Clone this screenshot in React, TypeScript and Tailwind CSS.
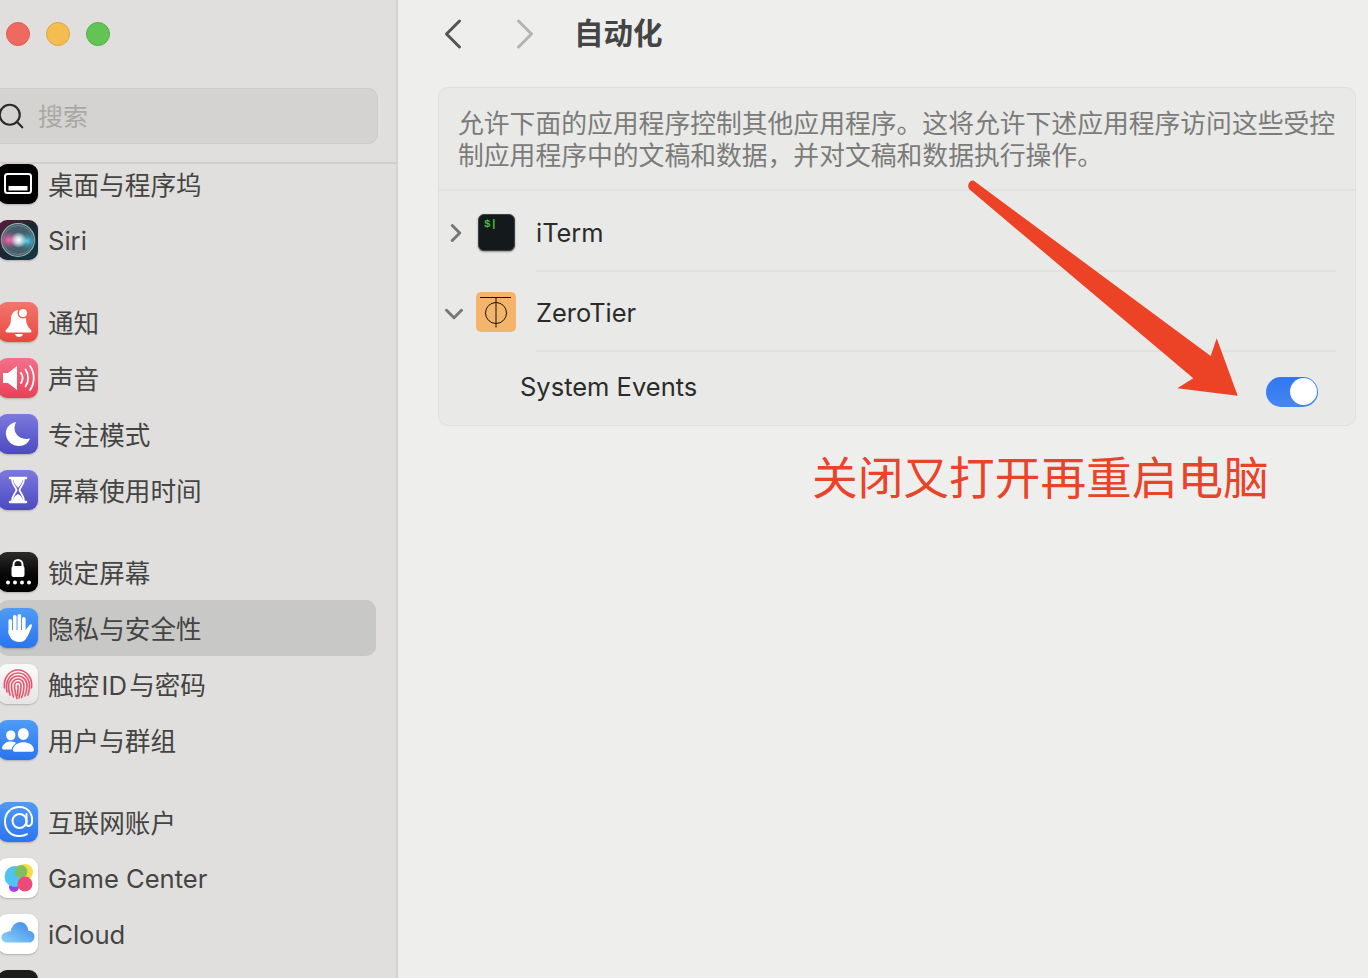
import { Search, ChevronLeft, ChevronRight, ChevronDown } from 'lucide-react';
import { IoPeople } from 'react-icons/io5';

function DockIcon() {
  return (
    <svg viewBox="-1 0 40 40" className="w-full h-full">
      <rect x="6" y="10" width="26" height="19" rx="2.500" fill="none" stroke="#fff" strokeWidth="2" />
      <rect x="9.500" y="22" width="19" height="4.500" fill="#fff" />
    </svg>
  );
}

function SiriIcon() {
  return (
    <svg viewBox="0 0 40 40" className="w-full h-full">
      <defs>
        <radialGradient id="siriL"><stop offset="0" stopColor="#ff6cb0" /><stop offset="1" stopColor="#b04a80" stopOpacity="0.25" /></radialGradient>
        <radialGradient id="siriR"><stop offset="0" stopColor="#5fd4f0" /><stop offset="1" stopColor="#2c7f9a" stopOpacity="0.25" /></radialGradient>
        <radialGradient id="siriC"><stop offset="0" stopColor="#fff" /><stop offset="0.4" stopColor="#e8f4ff" stopOpacity="0.8" /><stop offset="1" stopColor="#fff" stopOpacity="0" /></radialGradient>
      </defs>
      <circle cx="20" cy="20" r="16.500" fill="#43606b" stroke="#7cc3a4" strokeWidth="1.200" />
      <circle cx="20" cy="20" r="14.500" fill="none" stroke="#8a6f9a" strokeWidth="1" />
      <ellipse cx="11" cy="20" rx="9" ry="8" fill="url(#siriL)" />
      <ellipse cx="29" cy="21" rx="9" ry="8" fill="url(#siriR)" />
      <circle cx="20.500" cy="20" r="8" fill="url(#siriC)" />
    </svg>
  );
}

function BellIcon() {
  return (
    <svg viewBox="-1 0 40 40" className="w-full h-full" fill="#fff">
      <path d="M20 8c-5 0-8 4-8 9 0 5-2 8-5 11-1 1-.5 2.500 1 2.500h23c1.500 0 2-1.500 1-2.500-3-3-5-6-5-11 0-5-3-9-7-9z" />
      <path d="M16 32h8c-.5 2-2 3-4 3s-3.500-1-4-3z" />
      <circle cx="24" cy="11" r="5.500" fill="#ee5f56" />
      <circle cx="24" cy="11" r="4" />
    </svg>
  );
}

function SoundIcon() {
  return (
    <svg viewBox="-2 0 40 40" className="w-full h-full">
      <path d="M3 15h5l9-7v24l-9-7H3z" fill="#fff" />
      <g fill="none" stroke="#fff" strokeWidth="1.800" strokeLinecap="round">
        <path d="M21 15c2 3 2 7 0 10" />
        <path d="M25.500 11.500c3.500 5 3.500 12 0 17" />
        <path d="M30 8c5 7 5 17 0 24" />
      </g>
    </svg>
  );
}

function MoonIcon() {
  return (
    <svg viewBox="-2 0 40 40" className="w-full h-full">
      <path d="M16 8c-7 1.500-11 7-10 13 1 6.500 6.500 11 13 11 5.500 0 9.500-3 11-7.500-7 1.500-13-1.500-15-7-1-3.500-.5-6 1-9.500z" fill="#fff" />
    </svg>
  );
}

function HourglassIcon() {
  return (
    <svg viewBox="-1 0 40 40" className="w-full h-full">
      <path d="M11 8h16M11 32h16" stroke="#fff" strokeWidth="2.500" strokeLinecap="round" />
      <path d="M13 9h12c0 6-4 8-4.500 11 .5 3 4.500 5 4.500 11H13c0-6 4-8 4.500-11C17 17 13 15 13 9z" fill="none" stroke="#fff" strokeWidth="1.800" />
      <path d="M14.500 10h9c-.5 4-3 5.500-4.500 8-1.500-2.500-4-4-4.500-8zM14 30c.5-3 3-5 5-6 2 1 4.500 3 5 6z" fill="#fff" />
    </svg>
  );
}

function LockIcon() {
  return (
    <svg viewBox="0 0 40 40" className="w-full h-full">
      <path d="M15.500 15v-2.500a4.500 4.500 0 0 1 9 0V15" fill="none" stroke="#fff" strokeWidth="2" />
      <rect x="13.500" y="14" width="13" height="11" rx="2" fill="#fff" />
      {[10, 17, 24, 31].map((x) => (
        <circle key={x} cx={x} cy="30.500" r="2" fill="#fff" />
      ))}
    </svg>
  );
}

function HandIcon() {
  return (
    <svg viewBox="0 0 40 40" className="w-full h-full" fill="#fff">
      <rect x="10.500" y="11" width="3.600" height="16" rx="1.800" />
      <rect x="15" y="7" width="3.600" height="20" rx="1.800" />
      <rect x="19.500" y="6" width="3.600" height="20" rx="1.800" />
      <rect x="24" y="9" width="3.600" height="18" rx="1.800" />
      <path d="M10.500 22h17l4-5c1.500-1.500 3-.5 2.300 1.500-1.300 3.500-3 8-5.300 11.500-1.500 2.500-3.500 4-7 4-6.500 0-11-4-11-12z" />
    </svg>
  );
}

function FingerprintIcon() {
  return (
    <svg viewBox="0 0 40 40" className="w-full h-full" fill="none" stroke="#e8546c" strokeWidth="1.600" strokeLinecap="round">
      <path d="M6.500 24c-1.500-10 5-18 13.500-18s15 8 13.500 18" />
      <path d="M9 28c-2-9 2-19 11-19s13 9 11 18c-.3 1.500-.5 2.500-1 4" />
      <path d="M12 31c-1-3-1.500-6-1.500-9 0-5 4-10 9.500-10s9.500 5 9 11c-.2 3-1 6-2 9" />
      <path d="M15.500 33c-1-3.500-2-7-2-11 0-4 3-7 6.500-7s6.500 3 6 8c-.2 3.500-1 7-2.300 10.500" />
      <path d="M19 34.500c-1.200-4-2.500-8-2.500-12.500 0-2 1.500-4 3.500-4s3.500 2 3 5.500c-.3 3.500-1 7-2 10.500" />
      <path d="M20 21.500c.3 4-.3 8-.5 10" />
    </svg>
  );
}

function AtIcon() {
  return (
    <svg viewBox="-2 0 40 40" className="w-full h-full" fill="none" stroke="#fff" strokeWidth="2">
      <circle cx="19.500" cy="19" r="7" />
      <path d="M26.500 12v10c0 3 5 3 5.500-2 1-8-4-15-12.500-15C11 5 5 11 5 19.500S11 34 19 34c3 0 6-.5 8-2" strokeLinecap="round" />
    </svg>
  );
}

function GameCenterIcon() {
  return (
    <svg viewBox="0 0 40 40" className="w-full h-full">
      <circle cx="16" cy="29" r="5" fill="#a23fe0" />
      <circle cx="17" cy="18.500" r="10.500" fill="#4fc3f2" />
      <circle cx="27" cy="14" r="8" fill="#f7dd3f" />
      <circle cx="23" cy="13.500" r="6.500" fill="#7fbf62" />
      <circle cx="27" cy="26" r="7.500" fill="#ee4a78" />
    </svg>
  );
}

function CloudIcon() {
  return (
    <svg viewBox="0 0 40 40" className="w-full h-full">
      <defs>
        <linearGradient id="cloudFill" x1="0" y1="1" x2="1" y2="0">
          <stop offset="0" stopColor="#8fd3f7" />
          <stop offset="1" stopColor="#3a86e8" />
        </linearGradient>
      </defs>
      <path d="M9 28.500c-3.500 0-5.500-2.500-5.500-5 0-3 2.500-5 5-5 1-1 2.500-1.500 4-1 1.500-6 5-9.500 9.500-9.500 5 0 8 4 8.500 9 3-.5 6 2 6 5.500s-2.500 6-4.500 6z" fill="url(#cloudFill)" />
    </svg>
  );
}

interface Item {
  label: string;
  box: string;
  icon?: React.ReactNode;
  active?: boolean;
}

const sections: Item[][] = [
  [
    { label: '桌面与程序坞', box: 'bg-black', icon: <DockIcon /> },
    { label: 'Siri', box: 'bg-gradient-to-br from-[#5b1a3a] via-[#1c2430] to-[#0f3a4a]', icon: <SiriIcon /> },
  ],
  [
    { label: '通知', box: 'bg-gradient-to-b from-[#f2766c] to-[#e8463f]', icon: <BellIcon /> },
    { label: '声音', box: 'bg-gradient-to-b from-[#f3708a] to-[#e93f58]', icon: <SoundIcon /> },
    { label: '专注模式', box: 'bg-gradient-to-b from-[#7d79dd] to-[#4c49c0]', icon: <MoonIcon /> },
    { label: '屏幕使用时间', box: 'bg-gradient-to-b from-[#7d79dd] to-[#4c49c0]', icon: <HourglassIcon /> },
  ],
  [
    { label: '锁定屏幕', box: 'bg-gradient-to-b from-[#2c2c2c] to-black', icon: <LockIcon /> },
    { label: '隐私与安全性', box: 'bg-gradient-to-b from-[#4f9bf5] to-[#2b74f0]', icon: <HandIcon />, active: true },
    { label: '触控\u200AID\u200A与密码', box: 'bg-gradient-to-b from-[#fbfbfb] to-[#e6e5e4]', icon: <FingerprintIcon /> },
    {
      label: '用户与群组',
      box: 'bg-gradient-to-b from-[#4f9bf5] to-[#2b74f0]',
      icon: <IoPeople className="w-[34px] h-[34px] text-white" />,
    },
  ],
  [
    { label: '互联网账户', box: 'bg-gradient-to-b from-[#4f9bf5] to-[#2b74f0]', icon: <AtIcon /> },
    { label: 'Game Center', box: 'bg-white', icon: <GameCenterIcon /> },
    { label: 'iCloud', box: 'bg-white', icon: <CloudIcon /> },
    { label: '', box: 'bg-[#1c1c1c]' },
  ],
];

function SidebarRow({ item }: { item: Item }) {
  // Latin labels sit a pixel higher than the CJK ones
  const latin = /^[A-Za-z]/.test(item.label);
  return (
    <div
      className={`h-[56px] w-[378px] -ml-[2px] flex items-center gap-[10px] rounded-[10px] ${
        item.active ? 'bg-[#c8c8c6]' : ''
      }`}
    >
      <div className={`w-[40px] h-[40px] -mt-[1px] shrink-0 rounded-[9px] flex items-center justify-center shadow-[0_1px_2px_rgba(0,0,0,0.22)] ${item.box}`}>
        {item.icon}
      </div>
      <span className={`${latin ? 'mt-[1px]' : 'mt-[3px]'} text-[25.600px] leading-none text-[#444443]`}>{item.label}</span>
    </div>
  );
}

function Sidebar() {
  return (
    <aside className="w-[398px] h-full shrink-0 flex flex-col bg-[#e0dfdd] border-r-2 border-[#d3d2d0] overflow-hidden">
      {/* Traffic lights */}
      <div className="h-[88px] shrink-0 pl-[6px] pt-[22px] flex gap-[16px]">
        <div className="w-[24px] h-[24px] rounded-full bg-[#ee6a5f] border border-[#dd5c52]" />
        <div className="w-[24px] h-[24px] rounded-full bg-[#f5bd4f] border border-[#dfa63e]" />
        <div className="w-[24px] h-[24px] rounded-full bg-[#61c454] border border-[#55b049]" />
      </div>

      {/* Search */}
      <div className="h-[56px] w-[390px] shrink-0 -ml-[12px] flex items-center gap-[12px] pl-[7px] rounded-[10px] bg-[#d4d3d1] border border-[#cdccca]">
        <Search className="w-[30px] h-[30px] text-[#2a2a2a]" strokeWidth={1.700} />
        <span className="mt-[3px] text-[25px] leading-none text-[#a9a8a6]">搜索</span>
      </div>

      <div className="h-[18px] shrink-0" />
      <div className="h-[2px] shrink-0 bg-[#cfcecc]" />

      {/* Settings list */}
      <div className="flex-1 min-h-0 overflow-hidden">
        <div className="-mt-[8px] flex flex-col gap-[26px]">
          {sections.map((rows, i) => (
            <div key={i} className="flex flex-col">
              {rows.map((item, j) => (
                <SidebarRow key={j} item={item} />
              ))}
            </div>
          ))}
        </div>
      </div>
    </aside>
  );
}

function ITermIcon() {
  return (
    <div className="w-[37px] h-[37px] -mt-[2px] rounded-[6px] bg-[#14191b] border border-[#3b4144] shadow-[0_1px_2px_rgba(0,0,0,0.4)] pl-[5px] pt-[2px]">
      <span className="block text-[11px] leading-[15px] font-bold text-[#42c03a] font-['Liberation_Mono',monospace]">$|</span>
    </div>
  );
}

function ZeroTierIcon() {
  return (
    <svg viewBox="0 0 40 40" className="w-[40px] h-[40px] -mt-[2px]">
      <rect width="40" height="40" rx="5" fill="#f3b56b" />
      <path d="M4 5.500h31M20 5.500v30" stroke="#1a1408" strokeWidth="1" fill="none" />
      <circle cx="20" cy="21" r="10.500" stroke="#1a1408" strokeWidth="1" fill="none" />
    </svg>
  );
}

function Toggle() {
  return (
    <div className="w-[52px] h-[30px] mt-[6px] rounded-full bg-gradient-to-b from-[#2f78ee] to-[#4587f3] flex items-center justify-end pr-[1px]">
      <div className="w-[27px] h-[27px] rounded-full bg-white" />
    </div>
  );
}

function Main() {
  return (
    <main className="flex-1 min-w-0 h-full flex flex-col bg-[#eeeeec] pl-[40px] pr-[12px]">
      <header className="h-[68px] shrink-0 flex items-center -ml-[11px]">
        <ChevronLeft className="w-[52px] h-[52px] text-[#555]" strokeWidth={1.400} />
        <ChevronRight className="w-[52px] h-[52px] ml-[20px] text-[#b4b4b2]" strokeWidth={1.400} />
        <h1 className="ml-[23px] text-[29.500px] leading-none font-bold text-[#444]">自动化</h1>
      </header>

      <section className="mt-[19px] rounded-[10px] bg-[#e9e9e7] border border-[#e0e0de]">
        <p className="h-[103px] px-[19px] pt-[20px] text-[25.800px] leading-[32px] text-[#7b7b7a] border-b-2 border-[#e1e1df]">
          允许下面的应用程序控制其他应用程序。这将允许下述应用程序访问这些受控制应用程序中的文稿和数据，并对文稿和数据执行操作。
        </p>

        <div className="h-[79px] flex items-center pl-[2px] pt-[5px]">
          <ChevronRight className="w-[30px] h-[30px] text-[#777]" strokeWidth={2.400} />
          <div className="ml-[7px]">
            <ITermIcon />
          </div>
          <span className="ml-[21px] text-[25.400px] leading-none text-[#2b2b2b]">iTerm</span>
        </div>
        <div className="h-[2px] ml-[97px] mr-[19px] bg-[#e1e1df]" />

        <div className="h-[78px] flex items-center pt-[3px]">
          <ChevronDown className="w-[30px] h-[30px] mt-[2px] text-[#777]" strokeWidth={2.400} />
          <div className="ml-[7px]">
            <ZeroTierIcon />
          </div>
          <span className="ml-[20px] mt-[1px] text-[25.400px] leading-none text-[#2b2b2b]">ZeroTier</span>
        </div>
        <div className="h-[2px] ml-[97px] mr-[19px] bg-[#e1e1df]" />

        <div className="h-[73px] flex items-center justify-between pl-[81px] pr-[37px]">
          <span className="mb-[4px] text-[25.500px] leading-none text-[#2b2b2b]">System Events</span>
          <Toggle />
        </div>
      </section>

      <p className="mt-[24px] ml-[374px] text-[45.700px] leading-[58px] whitespace-nowrap text-[#e9432a]">关闭又打开再重启电脑</p>
    </main>
  );
}

export default function App() {
  return (
    <div className="relative w-[1368px] h-[978px] flex overflow-hidden font-['Inter','Noto_Sans_CJK_SC',sans-serif]">
      <Sidebar />
      <Main />
      {/* Red annotation arrow */}
      <svg viewBox="0 0 1368 978" className="absolute inset-0 w-[1368px] h-[978px] pointer-events-none">
        <path
          d="M973.500 180.500 L1210.700 356 L1216.700 338.300 L1237.700 395.700 L1177.300 388.300 L1193.300 378.300 L969.300 189.300 C966.500 186 969.500 179.500 973.500 180.500 Z"
          fill="#ec4225"
        />
      </svg>
    </div>
  );
}
